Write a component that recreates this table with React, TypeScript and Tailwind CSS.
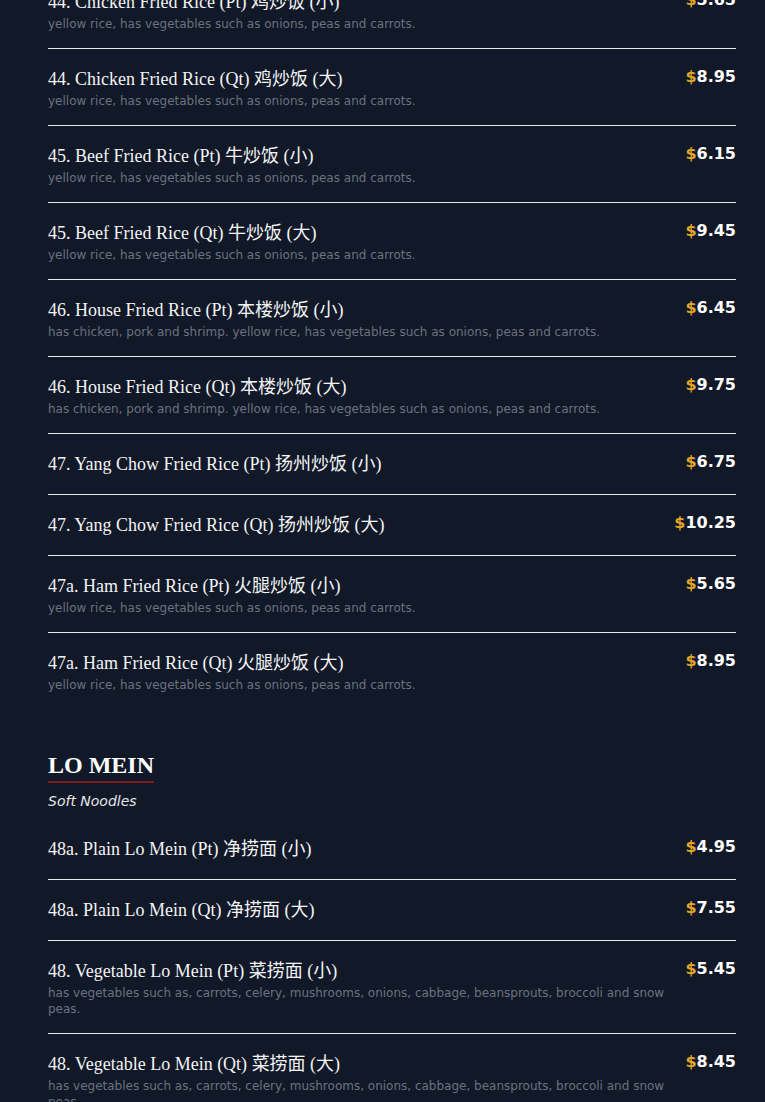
import React from "react";

type Item = { name: string; zh: string; desc?: string; price: string };

const riceDesc = "yellow rice, has vegetables such as onions, peas and carrots.";
const houseDesc =
  "has chicken, pork and shrimp. yellow rice, has vegetables such as onions, peas and carrots.";
const vegDesc =
  "has vegetables such as, carrots, celery, mushrooms, onions, cabbage, beansprouts, broccoli and snow peas.";

const friedRice: Item[] = [
  { name: "44. Chicken Fried Rice (Pt)", zh: "鸡炒饭 (小)", desc: riceDesc, price: "5.65" },
  { name: "44. Chicken Fried Rice (Qt)", zh: "鸡炒饭 (大)", desc: riceDesc, price: "8.95" },
  { name: "45. Beef Fried Rice (Pt)", zh: "牛炒饭 (小)", desc: riceDesc, price: "6.15" },
  { name: "45. Beef Fried Rice (Qt)", zh: "牛炒饭 (大)", desc: riceDesc, price: "9.45" },
  { name: "46. House Fried Rice (Pt)", zh: "本楼炒饭 (小)", desc: houseDesc, price: "6.45" },
  { name: "46. House Fried Rice (Qt)", zh: "本楼炒饭 (大)", desc: houseDesc, price: "9.75" },
  { name: "47. Yang Chow Fried Rice (Pt)", zh: "扬州炒饭 (小)", price: "6.75" },
  { name: "47. Yang Chow Fried Rice (Qt)", zh: "扬州炒饭 (大)", price: "10.25" },
  { name: "47a. Ham Fried Rice (Pt)", zh: "火腿炒饭 (小)", desc: riceDesc, price: "5.65" },
  { name: "47a. Ham Fried Rice (Qt)", zh: "火腿炒饭 (大)", desc: riceDesc, price: "8.95" },
];

const loMein: Item[] = [
  { name: "48a. Plain Lo Mein (Pt)", zh: "净捞面 (小)", price: "4.95" },
  { name: "48a. Plain Lo Mein (Qt)", zh: "净捞面 (大)", price: "7.55" },
  { name: "48. Vegetable Lo Mein (Pt)", zh: "菜捞面 (小)", desc: vegDesc, price: "5.45" },
  { name: "48. Vegetable Lo Mein (Qt)", zh: "菜捞面 (大)", desc: vegDesc, price: "8.45" },
];

function Row({ item, last }: { item: Item; last: boolean }) {
  return (
    <div
      className={`flex items-start justify-between gap-4 py-4 ${
        last ? "" : "border-b border-[#e5e7eb]"
      }`}
    >
      <div className="min-w-0 flex-1">
        <div className="text-[18px] leading-7 text-[#f3f4f6] [font-family:'Liberation_Serif','Noto_Sans_CJK_SC',serif]">
          {item.name} {item.zh}
        </div>
        {item.desc && (
          <div className="text-[12px] leading-4 text-[#6b7280] [font-family:'DejaVu_Sans',sans-serif]">
            {item.desc}
          </div>
        )}
      </div>
      <div className="shrink-0 text-[16px] leading-6 font-bold text-white [font-family:'DejaVu_Sans',sans-serif]">
        <span className="text-[#e3a526]">$</span>
        {item.price}
      </div>
    </div>
  );
}

export default function App() {
  return (
    <div className="h-[1102px] w-full overflow-hidden bg-[#111827]">
      <div className="-mt-[28px] pl-12 pr-[29px] pb-10">
        <div>
          {friedRice.map((it, i) => (
            <Row key={i} item={it} last={i === friedRice.length - 1} />
          ))}
        </div>
        <div className="mt-10">
          <h2 className="inline-block border-b-2 border-[#7f1d1d] text-[24px] leading-8 font-bold text-white [font-family:'Liberation_Serif',serif]">
            LO MEIN
          </h2>
          <p className="mt-2 text-[14px] leading-5 italic text-[#e5e7eb] [font-family:'DejaVu_Sans',sans-serif]">
            Soft Noodles
          </p>
          <div className="mt-2">
            {loMein.map((it, i) => (
              <Row key={i} item={it} last={i === loMein.length - 1} />
            ))}
          </div>
        </div>
      </div>
    </div>
  );
}
